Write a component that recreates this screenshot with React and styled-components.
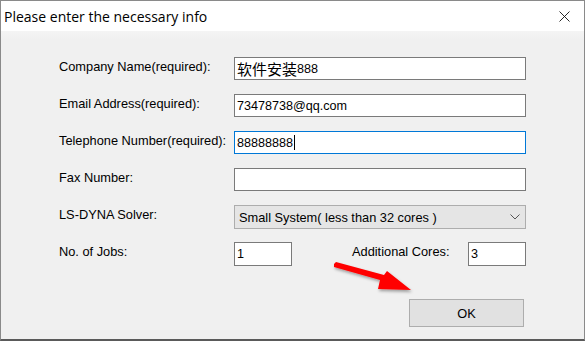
import styled, { createGlobalStyle } from "styled-components";

const GlobalStyle = createGlobalStyle`
  html, body {
    margin: 0;
    padding: 0;
    background: #ffffff;
  }
  * {
    box-sizing: border-box;
  }
`;

const Window = styled.div`
  width: 585px;
  height: 341px;
  display: flex;
  flex-direction: column;
  border: 1px solid #8a8a8a;
  border-bottom: 2px solid #5a5a5a;
  background: #f0f0f0;
  position: relative;
  overflow: hidden;
`;

const TitleBar = styled.div`
  height: 30px;
  flex-shrink: 0;
  background: #ffffff;
  display: flex;
  align-items: center;
  justify-content: space-between;
  padding: 0 14px 0 3px;
`;

const Title = styled.span`
  font-family: "Open Sans", "Noto Sans", sans-serif;
  font-size: 14px;
  color: #000;
`;

const CloseButton = styled.div`
  width: 12px;
  height: 12px;
  display: flex;
  align-items: center;
  justify-content: center;
`;

const Body = styled.div`
  flex: 1;
  display: flex;
  flex-direction: column;
  padding: 26px 59px 0 58px;
  background: linear-gradient(#f4f4f4, #f0f0f0 8px);
`;

const Form = styled.div`
  display: grid;
  grid-template-columns: 175px 292px;
  grid-auto-rows: 24px;
  row-gap: 13px;
`;

const Label = styled.label`
  font-family: "Liberation Sans", Arial, sans-serif;
  font-size: 12.8px;
  color: #000;
  line-height: 19px;
  white-space: nowrap;
`;

const TextBox = styled.div`
  height: ${(p) => (p.$tall ? 24 : 23)}px;
  width: ${(p) => (p.$width ? `${p.$width}px` : "100%")};
  background: #fff;
  border: 1px solid ${(p) => (p.$focused ? "#0078d7" : "#7a7a7a")};
  display: flex;
  align-items: center;
  padding-left: 2px;
  font-family: "Liberation Sans", Arial, "Noto Sans CJK SC", sans-serif;
  font-size: 12.6px;
  color: #000;
`;

const Cjk = styled.span`
  font-family: "Noto Sans CJK SC", sans-serif;
  font-size: 15px;
`;

const Caret = styled.span`
  display: inline-block;
  width: 1px;
  height: 15px;
  background: #000;
  margin-left: 1px;
`;

const Select = styled.div`
  height: 24px;
  background: #e5e5e5;
  border: 1px solid #adadad;
  display: flex;
  align-items: center;
  justify-content: space-between;
  padding: 0 5px 0 4px;
  font-family: "Liberation Sans", Arial, sans-serif;
  font-size: 12.8px;
  color: #000;
`;

const JobsRow = styled.div`
  display: flex;
  align-items: flex-start;
`;

const InlineLabel = styled(Label)`
  margin-left: 60px;
`;

const PushRight = styled.div`
  margin-left: auto;
`;

const Footer = styled.div`
  display: flex;
  justify-content: flex-end;
  margin-top: 33px;
  padding-right: 1px;
`;

const Button = styled.button`
  width: 115px;
  height: 28px;
  background: #e1e1e1;
  border: 1px solid #adadad;
  font-family: "Liberation Sans", Arial, sans-serif;
  font-size: 12.8px;
  color: #000;
  padding: 0;
`;

const Arrow = styled.svg`
  position: absolute;
  left: 326px;
  top: 255px;
  pointer-events: none;
`;

export default function App() {
  return (
    <>
      <GlobalStyle />
      <Window>
        <TitleBar>
          <Title>Please enter the necessary info</Title>
          <CloseButton>
            <svg width="11" height="11" viewBox="0 0 11 11">
              <path d="M0.5 0.5 L10.5 10.5 M10.5 0.5 L0.5 10.5" stroke="#111" strokeWidth="0.9" />
            </svg>
          </CloseButton>
        </TitleBar>
        <Body>
          <Form>
            <Label>Company Name(required):</Label>
            <TextBox>
              <Cjk>软件安装</Cjk>888
            </TextBox>
            <Label>Email Address(required):</Label>
            <TextBox>73478738@qq.com</TextBox>
            <Label>Telephone Number(required):</Label>
            <TextBox $focused>
              88888888
              <Caret />
            </TextBox>
            <Label>Fax Number:</Label>
            <TextBox />
            <Label>LS-DYNA Solver:</Label>
            <Select>
              <span>Small System( less than 32 cores )</span>
              <svg width="10" height="6" viewBox="0 0 10 6">
                <path d="M0.5 0.5 L5 5 L9.5 0.5" stroke="#555" strokeWidth="1" fill="none" />
              </svg>
            </Select>
            <Label>No. of Jobs:</Label>
            <JobsRow>
              <TextBox $tall $width={58}>1</TextBox>
              <InlineLabel>Additional Cores:</InlineLabel>
              <PushRight>
                <TextBox $tall $width={58}>3</TextBox>
              </PushRight>
            </JobsRow>
          </Form>
          <Footer>
            <Button>OK</Button>
          </Footer>
        </Body>
        <Arrow width="90" height="40" viewBox="0 0 90 40">
          <defs>
            <filter id="sh" x="-20%" y="-20%" width="140%" height="160%">
              <feDropShadow dx="1" dy="2" stdDeviation="1.5" floodColor="#000" floodOpacity="0.35" />
            </filter>
          </defs>
          <polygon
            points="7,8 7,11 53,24 51,33 84,34 60,15 57,19 9,6"
            fill="#ff0000"
            filter="url(#sh)"
          />
        </Arrow>
      </Window>
    </>
  );
}
